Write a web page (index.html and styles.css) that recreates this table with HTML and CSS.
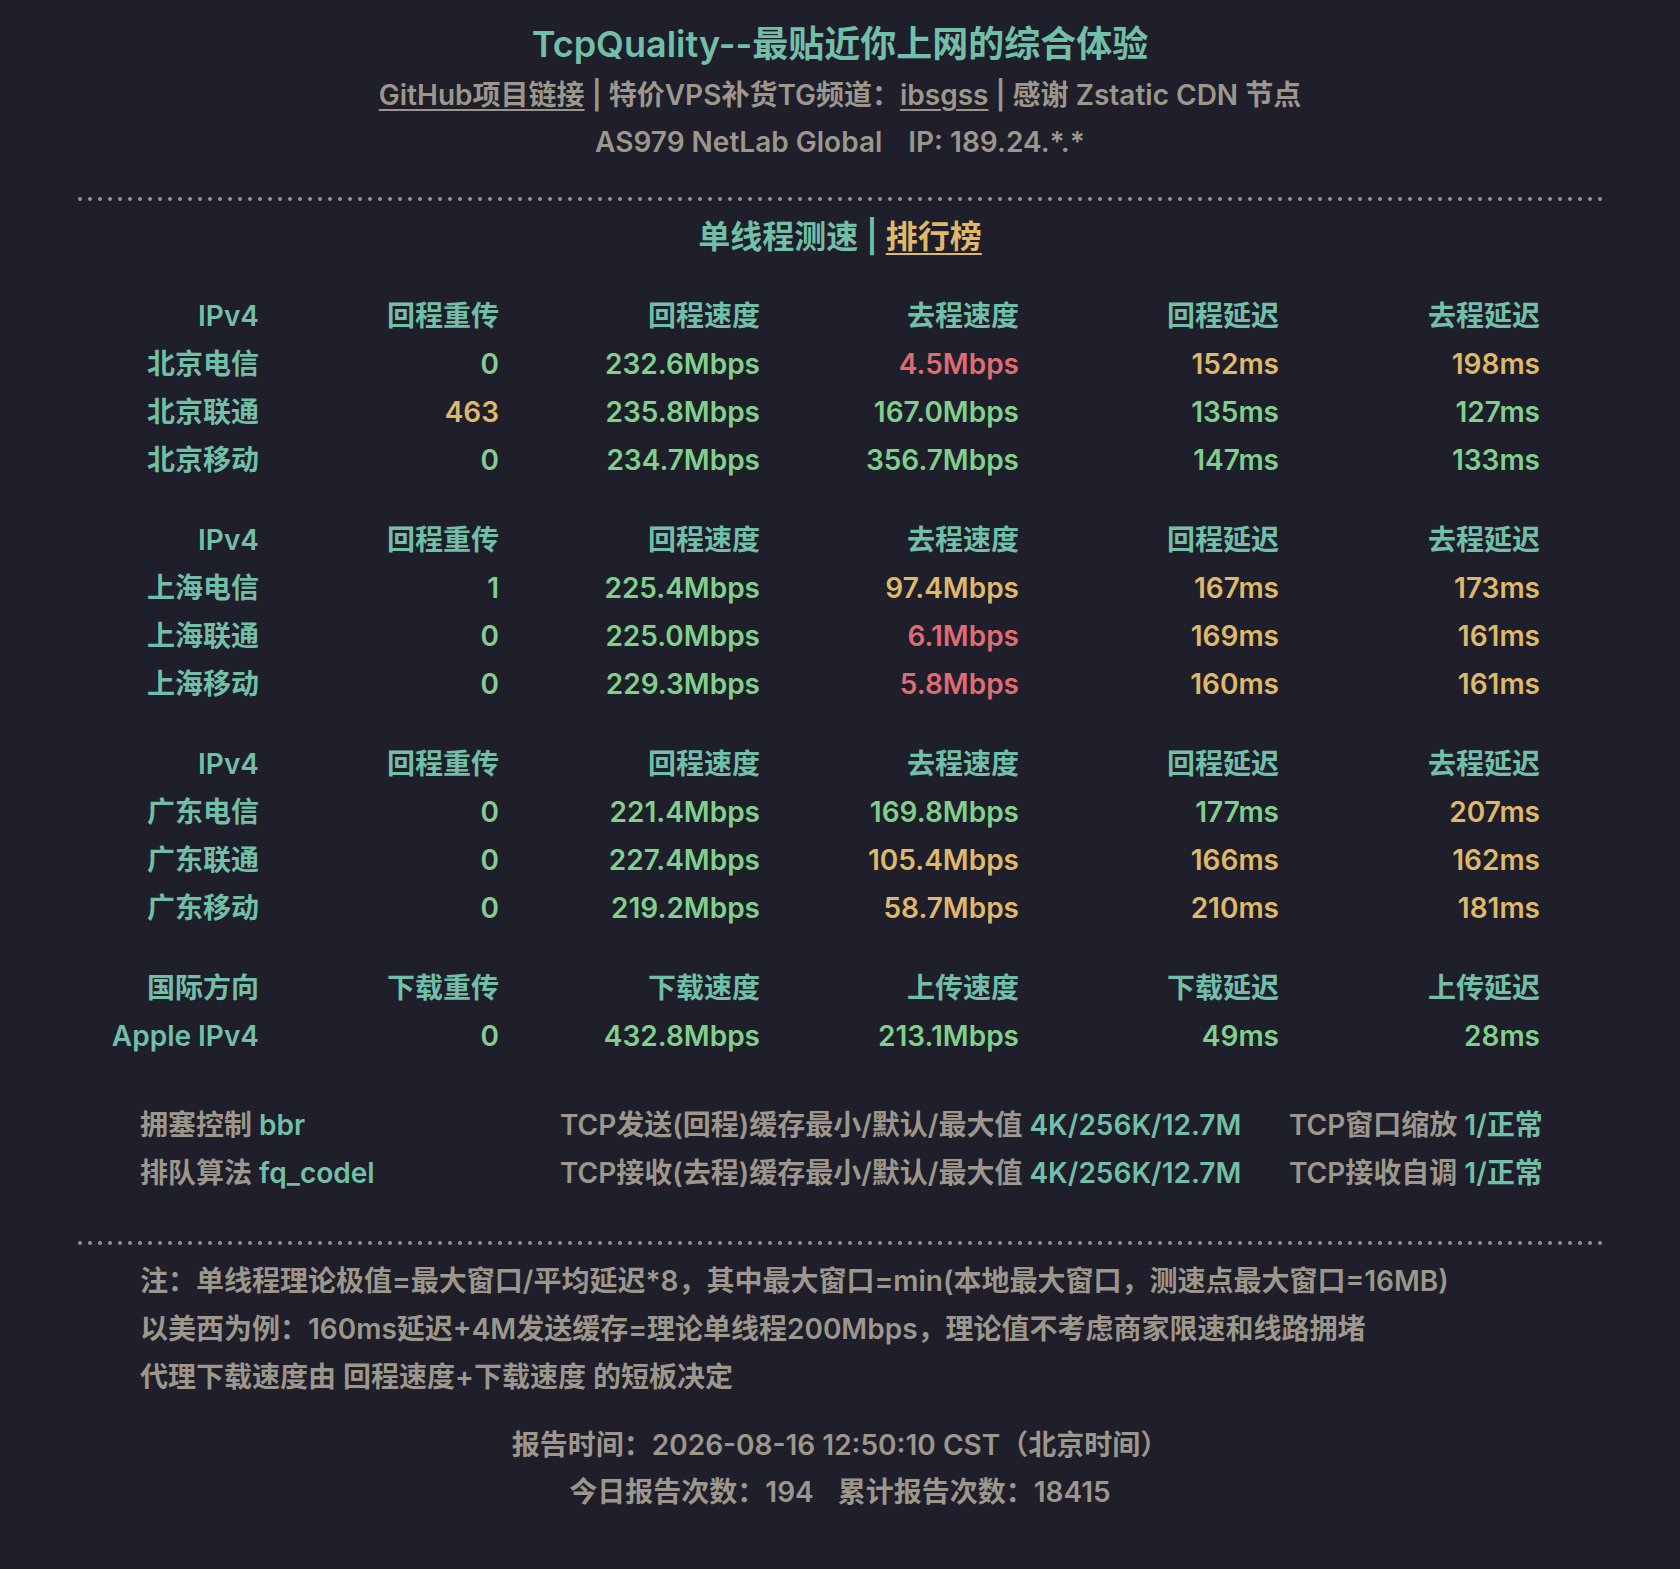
FILE: index.html
```html
<!DOCTYPE html>
<html lang="zh-CN">
<head>
<meta charset="utf-8">
<title>TcpQuality</title>
<link rel="stylesheet" href="styles.css">
</head>
<body>
<div class="page">
  <header class="head">
    <h1 class="title">TcpQuality--最贴近你上网的综合体验</h1>
    <p class="sub"><a class="lnk" href="#">GitHub项目链接</a> <span class="bar">|</span> 特价VPS补货TG频道：<a class="lnk" href="#">ibsgss</a> <span class="bar">|</span> 感谢 Zstatic CDN 节点</p>
    <p class="sub">AS979 NetLab Global<span class="gap"></span>IP: 189.24.*.*</p>
  </header>

  <div class="dots"></div>

  <h2 class="section">单线程测速 <span class="bar">|</span> <a class="rank" href="#">排行榜</a></h2>

  <div class="table">
    <div class="grp">
      <span class="h">IPv4</span><span class="h">回程重传</span><span class="h">回程速度</span><span class="h">去程速度</span><span class="h">回程延迟</span><span class="h">去程延迟</span>
      <span class="h">北京电信</span><span class="g">0</span><span class="g">232.6Mbps</span><span class="r">4.5Mbps</span><span class="y">152ms</span><span class="y">198ms</span>
      <span class="h">北京联通</span><span class="y">463</span><span class="g">235.8Mbps</span><span class="g">167.0Mbps</span><span class="g">135ms</span><span class="g">127ms</span>
      <span class="h">北京移动</span><span class="g">0</span><span class="g">234.7Mbps</span><span class="g">356.7Mbps</span><span class="g">147ms</span><span class="g">133ms</span>
    </div>
    <div class="grp">
      <span class="h">IPv4</span><span class="h">回程重传</span><span class="h">回程速度</span><span class="h">去程速度</span><span class="h">回程延迟</span><span class="h">去程延迟</span>
      <span class="h">上海电信</span><span class="g">1</span><span class="g">225.4Mbps</span><span class="y">97.4Mbps</span><span class="y">167ms</span><span class="y">173ms</span>
      <span class="h">上海联通</span><span class="g">0</span><span class="g">225.0Mbps</span><span class="r">6.1Mbps</span><span class="y">169ms</span><span class="y">161ms</span>
      <span class="h">上海移动</span><span class="g">0</span><span class="g">229.3Mbps</span><span class="r">5.8Mbps</span><span class="y">160ms</span><span class="y">161ms</span>
    </div>
    <div class="grp">
      <span class="h">IPv4</span><span class="h">回程重传</span><span class="h">回程速度</span><span class="h">去程速度</span><span class="h">回程延迟</span><span class="h">去程延迟</span>
      <span class="h">广东电信</span><span class="g">0</span><span class="g">221.4Mbps</span><span class="g">169.8Mbps</span><span class="g">177ms</span><span class="y">207ms</span>
      <span class="h">广东联通</span><span class="g">0</span><span class="g">227.4Mbps</span><span class="y">105.4Mbps</span><span class="y">166ms</span><span class="y">162ms</span>
      <span class="h">广东移动</span><span class="g">0</span><span class="g">219.2Mbps</span><span class="y">58.7Mbps</span><span class="y">210ms</span><span class="y">181ms</span>
    </div>
    <div class="grp">
      <span class="h">国际方向</span><span class="h">下载重传</span><span class="h">下载速度</span><span class="h">上传速度</span><span class="h">下载延迟</span><span class="h">上传延迟</span>
      <span class="h">Apple IPv4</span><span class="g">0</span><span class="g">432.8Mbps</span><span class="g">213.1Mbps</span><span class="g">49ms</span><span class="g">28ms</span>
    </div>
  </div>

  <div class="info">
    <span>拥塞控制 <b class="t">bbr</b></span>
    <span>TCP发送(回程)缓存最小/默认/最大值 <b class="t">4K/256K/12.7M</b></span>
    <span class="end">TCP窗口缩放 <b class="t">1/正常</b></span>
    <span>排队算法 <b class="t">fq_codel</b></span>
    <span>TCP接收(去程)缓存最小/默认/最大值 <b class="t">4K/256K/12.7M</b></span>
    <span class="end">TCP接收自调 <b class="t">1/正常</b></span>
  </div>

  <div class="dots dots2"></div>

  <div class="notes">
    <p>注：单线程理论极值=最大窗口/平均延迟*8，其中最大窗口=min(本地最大窗口，测速点最大窗口=16MB)</p>
    <p>以美西为例：160ms延迟+4M发送缓存=理论单线程200Mbps，理论值不考虑商家限速和线路拥堵</p>
    <p>代理下载速度由 回程速度+下载速度 的短板决定</p>
  </div>

  <div class="report">
    <p>报告时间：2026-08-16 12:50:10 CST（北京时间）</p>
    <p>今日报告次数：194<span class="gap"></span>累计报告次数：18415</p>
  </div>
</div>
</body>
</html>
```

FILE: styles.css
```css
html, body {
  margin: 0;
  padding: 0;
  background: #1f1e2b;
}

body {
  font-family: Inter, "Noto Sans CJK SC", sans-serif;
  font-weight: 600;
  font-size: 28px;
  color: #9d978b;
}

.page {
  width: 1524px;
  margin: 0 auto;
  padding-top: 20px;
}

p, h1, h2 {
  margin: 0;
}

.head {
  text-align: center;
}

.title {
  font-size: 36px;
  line-height: 48px;
  font-weight: 600;
  color: #72bfa7;
  margin-bottom: 4px;
}

.sub {
  line-height: 47px;
  white-space: nowrap;
}

.lnk {
  color: #9d978b;
  text-decoration: underline;
  text-underline-offset: 4px;
  text-decoration-thickness: 2px;
}

.gap {
  display: inline-block;
  width: 26px;
}

.dots {
  height: 4px;
  margin-top: 31px;
  background-image: radial-gradient(circle at center, #8f897e 1.7px, rgba(0,0,0,0) 2.3px);
  background-size: 10px 4px;
  background-repeat: repeat-x;
  background-position: -3px 0;
}

.section {
  margin-top: 14px;
  text-align: center;
  font-size: 32px;
  line-height: 44px;
  font-weight: 600;
  color: #72bfa7;
}

.rank {
  color: #dfb86a;
  text-decoration: underline;
  text-underline-offset: 5px;
  text-decoration-thickness: 2px;
}

.table {
  margin-top: 33px;
  display: flex;
  flex-direction: column;
  gap: 32px;
}

.grp {
  display: grid;
  grid-template-columns: 181px 240px 261px 259px 260px 261px;
  line-height: 48px;
}

.grp span {
  justify-self: end;
  white-space: nowrap;
}

.h { color: #72bfa7; }
.g { color: #80d08c; }
.y { color: #dfb86a; }
.r { color: #df6b73; }

.info {
  margin-top: 41px;
  padding-left: 62px;
  display: grid;
  grid-template-columns: 420px 729px 251px;
  line-height: 48px;
  white-space: nowrap;
}

.info .t {
  font-weight: 600;
  color: #72bfa7;
}

.dots2 {
  margin-top: 44px;
}

.notes {
  margin-top: 12px;
  padding-left: 62px;
  line-height: 48px;
  white-space: nowrap;
}

.report {
  margin-top: 21px;
  text-align: center;
  line-height: 47px;
}

.report .gap {
  width: 24px;
}
```
